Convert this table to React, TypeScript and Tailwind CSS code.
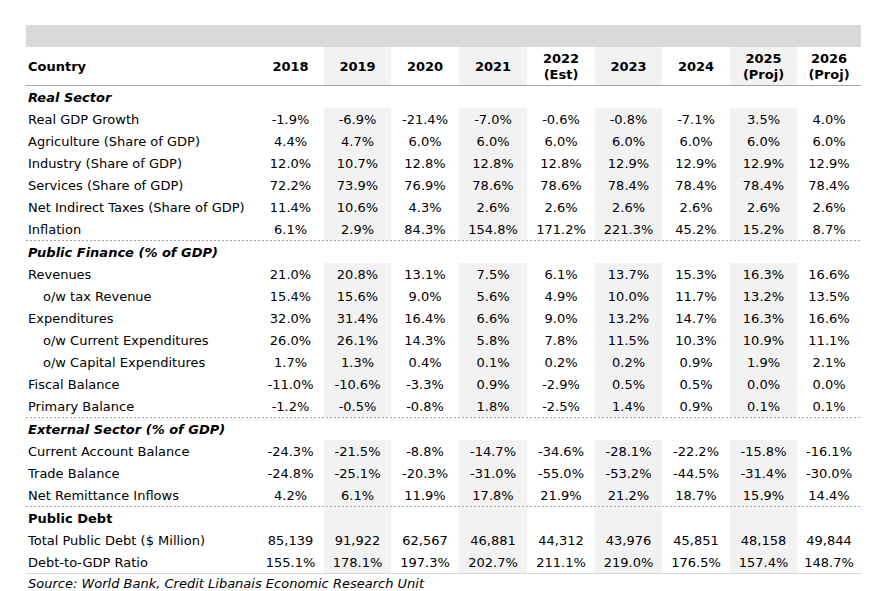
const COLS = 'grid grid-cols-[231px_67px_67px_68px_68px_68px_67px_68px_67px_64px]'
const SHADED = [false, true, false, true, false, true, false, true, false]

type Row =
  | { kind: 'section'; label: string; italic: boolean; shaded?: boolean }
  | { kind: 'data'; label: string; values: string[]; indent?: boolean }
  | { kind: 'sep' }

const ROWS: Row[] = [
  { kind: 'section', label: 'Real Sector', italic: true },
  { kind: 'data', label: 'Real GDP Growth', values: ['-1.9%', '-6.9%', '-21.4%', '-7.0%', '-0.6%', '-0.8%', '-7.1%', '3.5%', '4.0%'] },
  { kind: 'data', label: 'Agriculture (Share of GDP)', values: ['4.4%', '4.7%', '6.0%', '6.0%', '6.0%', '6.0%', '6.0%', '6.0%', '6.0%'] },
  { kind: 'data', label: 'Industry (Share of GDP)', values: ['12.0%', '10.7%', '12.8%', '12.8%', '12.8%', '12.9%', '12.9%', '12.9%', '12.9%'] },
  { kind: 'data', label: 'Services (Share of GDP)', values: ['72.2%', '73.9%', '76.9%', '78.6%', '78.6%', '78.4%', '78.4%', '78.4%', '78.4%'] },
  { kind: 'data', label: 'Net Indirect Taxes (Share of GDP)', values: ['11.4%', '10.6%', '4.3%', '2.6%', '2.6%', '2.6%', '2.6%', '2.6%', '2.6%'] },
  { kind: 'data', label: 'Inflation', values: ['6.1%', '2.9%', '84.3%', '154.8%', '171.2%', '221.3%', '45.2%', '15.2%', '8.7%'] },
  { kind: 'sep' },
  { kind: 'section', label: 'Public Finance (% of GDP)', italic: true },
  { kind: 'data', label: 'Revenues', values: ['21.0%', '20.8%', '13.1%', '7.5%', '6.1%', '13.7%', '15.3%', '16.3%', '16.6%'] },
  { kind: 'data', label: 'o/w tax Revenue', indent: true, values: ['15.4%', '15.6%', '9.0%', '5.6%', '4.9%', '10.0%', '11.7%', '13.2%', '13.5%'] },
  { kind: 'data', label: 'Expenditures', values: ['32.0%', '31.4%', '16.4%', '6.6%', '9.0%', '13.2%', '14.7%', '16.3%', '16.6%'] },
  { kind: 'data', label: 'o/w Current Expenditures', indent: true, values: ['26.0%', '26.1%', '14.3%', '5.8%', '7.8%', '11.5%', '10.3%', '10.9%', '11.1%'] },
  { kind: 'data', label: 'o/w Capital Expenditures', indent: true, values: ['1.7%', '1.3%', '0.4%', '0.1%', '0.2%', '0.2%', '0.9%', '1.9%', '2.1%'] },
  { kind: 'data', label: 'Fiscal Balance', values: ['-11.0%', '-10.6%', '-3.3%', '0.9%', '-2.9%', '0.5%', '0.5%', '0.0%', '0.0%'] },
  { kind: 'data', label: 'Primary Balance', values: ['-1.2%', '-0.5%', '-0.8%', '1.8%', '-2.5%', '1.4%', '0.9%', '0.1%', '0.1%'] },
  { kind: 'sep' },
  { kind: 'section', label: 'External Sector (% of GDP)', italic: true },
  { kind: 'data', label: 'Current Account Balance', values: ['-24.3%', '-21.5%', '-8.8%', '-14.7%', '-34.6%', '-28.1%', '-22.2%', '-15.8%', '-16.1%'] },
  { kind: 'data', label: 'Trade Balance', values: ['-24.8%', '-25.1%', '-20.3%', '-31.0%', '-55.0%', '-53.2%', '-44.5%', '-31.4%', '-30.0%'] },
  { kind: 'data', label: 'Net Remittance Inflows', values: ['4.2%', '6.1%', '11.9%', '17.8%', '21.9%', '21.2%', '18.7%', '15.9%', '14.4%'] },
  { kind: 'sep' },
  { kind: 'section', label: 'Public Debt', italic: false, shaded: true },
  { kind: 'data', label: 'Total Public Debt ($ Million)', values: ['85,139', '91,922', '62,567', '46,881', '44,312', '43,976', '45,851', '48,158', '49,844'] },
  { kind: 'data', label: 'Debt-to-GDP Ratio', values: ['155.1%', '178.1%', '197.3%', '202.7%', '211.1%', '219.0%', '176.5%', '157.4%', '148.7%'] },
]

const HEADERS: string[][] = [
  ['2018'],
  ['2019'],
  ['2020'],
  ['2021'],
  ['2022', '(Est)'],
  ['2023'],
  ['2024'],
  ['2025', '(Proj)'],
  ['2026', '(Proj)'],
]

function Separator() {
  return <div className="h-px bg-[image:repeating-linear-gradient(90deg,#a3a3a3_0px_2px,transparent_2px_4px)]" />
}

export default function App() {
  return (
    <div className="min-h-[591px] w-[870px] bg-white pt-[25px] pl-[26px] font-['DejaVu_Sans',Verdana,sans-serif] text-[13px] text-black">
      <div className="w-[835px]">
        {/* Title band */}
        <div className="h-[22px] bg-[#d9d9d9]" />

        {/* Column headers */}
        <div className={`${COLS} h-[39px] border-b border-[#a6a6a6] font-bold leading-[16px]`}>
          <div className="flex items-center pl-[2px] pt-[2px]">Country</div>
          {HEADERS.map((h, i) => (
            <div
              key={i}
              className={`flex flex-col items-center justify-center pt-[2px] text-center ${SHADED[i] ? 'bg-[#f2f2f2]' : ''}`}
            >
              {h.map((line) => (
                <span key={line}>{line}</span>
              ))}
            </div>
          ))}
        </div>

        {ROWS.map((row, idx) => {
          if (row.kind === 'sep') return <Separator key={idx} />
          if (row.kind === 'section') {
            return (
              <div key={idx} className={`${COLS} h-[22px] leading-[22px] font-bold`}>
                <div className={`pl-[2px] pt-px ${row.italic ? 'italic' : ''}`}>{row.label}</div>
                {SHADED.map((s, i) => (
                  <div key={i} className={s && row.shaded ? 'bg-[#f2f2f2]' : ''} />
                ))}
              </div>
            )
          }
          return (
            <div key={idx} className={`${COLS} h-[22px] leading-[21px]`}>
              <div className={`whitespace-nowrap pt-px ${row.indent ? 'pl-[17px]' : 'pl-[2px]'}`}>{row.label}</div>
              {row.values.map((v, i) => (
                <div key={i} className={`pt-px text-center ${SHADED[i] ? 'bg-[#f2f2f2]' : ''}`}>
                  {v}
                </div>
              ))}
            </div>
          )
        })}

        <div className="h-px bg-[#d9d9d9]" />
        <div className="pl-[2px] pt-[2px] leading-[16px] italic">
          Source: World Bank, Credit Libanais Economic Research Unit
        </div>
      </div>
    </div>
  )
}
